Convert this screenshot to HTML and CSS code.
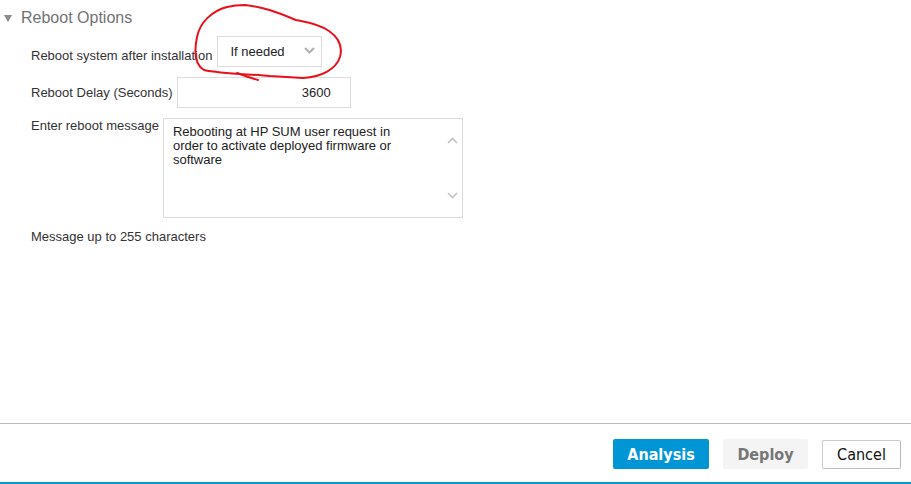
FILE: index.html
```html
<!DOCTYPE html>
<html>
<head>
<meta charset="utf-8">
<link rel="stylesheet" href="styles.css">
</head>
<body>
<div class="page">
  <div class="content">
    <div class="section-head"><span class="caret"></span>Reboot Options</div>
    <div class="form">
      <div class="row row-top">
        <label class="label label-low">Reboot system after installation</label>
        <div class="select">
          <span>If needed</span>
          <svg class="chev" width="11" height="7" viewBox="0 0 11 7"><path d="M1 1 L5.5 5.5 L10 1" fill="none" stroke="#b0b0b0" stroke-width="2"/></svg>
        </div>
      </div>
      <div class="row row-center">
        <label class="label">Reboot Delay (Seconds)</label>
        <div class="input">3600</div>
      </div>
      <div class="row row-top">
        <label class="label">Enter reboot message</label>
        <div class="textarea">
          <div class="ta-text">Rebooting at HP SUM user request in order to activate deployed firmware or software</div>
          <div class="ta-scroll">
            <svg width="11" height="7" viewBox="0 0 11 7"><path d="M1 6 L5.5 1.5 L10 6" fill="none" stroke="#c4c4c4" stroke-width="1.6"/></svg>
            <svg width="11" height="7" viewBox="0 0 11 7"><path d="M1 1 L5.5 5.5 L10 1" fill="none" stroke="#c4c4c4" stroke-width="1.6"/></svg>
          </div>
        </div>
      </div>
      <div class="hint">Message up to 255 characters</div>
    </div>
  </div>
  <div class="footer">
    <button class="btn btn-primary">Analysis</button>
    <button class="btn btn-disabled">Deploy</button>
    <button class="btn btn-default">Cancel</button>
  </div>
  <svg class="annotation" width="911" height="484" viewBox="0 0 911 484">
    <path d="M227,7 C212,11 200,22 197,37 C194,52 195,65 204,70 C222,74 250,74 270,76 L303,78 C322,77 336,69 340,57 C343,46 339,38 329,31 C319,24 306,22 296,20 C281,14 265,7 245,5 C236,5 231,6 227,7" fill="none" stroke="#e8101a" stroke-width="2" stroke-linecap="round"/>
    <path d="M237,73 C245,76 251,78 258,80" fill="none" stroke="#e8101a" stroke-width="2" stroke-linecap="round"/>
  </svg>
</div>
</body>
</html>
```

FILE: styles.css
```css
html, body {
  margin: 0;
  padding: 0;
  background: #ffffff;
}

body {
  font-family: "Liberation Sans", Arial, sans-serif;
  color: #333333;
}

.page {
  position: relative;
  width: 911px;
  height: 484px;
  display: flex;
  flex-direction: column;
  overflow: hidden;
}

.content {
  flex: 1;
  display: flex;
  flex-direction: column;
}

.section-head {
  display: flex;
  align-items: center;
  padding: 9px 0 0 4px;
  height: 18px;
  font-size: 16px;
  line-height: 18px;
  color: #727272;
}

.caret {
  width: 0;
  height: 0;
  border-left: 4px solid transparent;
  border-right: 4px solid transparent;
  border-top: 7px solid #8a8a8a;
  margin-right: 9px;
  margin-top: 1px;
}

.form {
  display: flex;
  flex-direction: column;
  padding: 9px 0 0 31px;
  gap: 10px;
}

.row {
  display: flex;
  gap: 4px;
}

.row-top {
  align-items: flex-start;
}

.row-center {
  align-items: center;
}

.label {
  font-size: 13px;
  line-height: 15px;
  color: #333333;
}

.label-low {
  padding-top: 12px;
}

.select {
  box-sizing: border-box;
  width: 105px;
  height: 31px;
  border: 1px solid #dddddd;
  display: flex;
  align-items: center;
  justify-content: space-between;
  padding: 0 6px 0 12px;
  font-size: 13px;
  color: #222222;
  margin-left: 1px;
}

.select span {
  margin-top: -1px;
}

.chev {
  margin-top: -2px;
}

.input {
  box-sizing: border-box;
  width: 174px;
  height: 31px;
  border: 1px solid #dddddd;
  display: flex;
  align-items: center;
  justify-content: flex-end;
  padding-right: 19px;
  font-size: 13px;
  color: #222222;
}

.textarea {
  box-sizing: border-box;
  width: 300px;
  height: 100px;
  border: 1px solid #dddddd;
  display: flex;
  justify-content: space-between;
  align-items: flex-start;
  padding: 6px 4px 0 9px;
}

.ta-text {
  width: 240px;
  font-size: 13px;
  line-height: 14px;
  color: #222222;
}

.ta-scroll {
  box-sizing: border-box;
  display: flex;
  flex-direction: column;
  justify-content: space-between;
  height: 74px;
  padding-top: 12px;
}

.hint {
  margin-top: 1px;
  font-size: 13px;
  line-height: 15px;
  color: #333333;
}

.footer {
  box-sizing: border-box;
  height: 61px;
  border-top: 1px solid #bbbbbb;
  border-bottom: 2px solid #0096d6;
  display: flex;
  justify-content: flex-end;
  align-items: flex-start;
  gap: 14px;
  padding: 15px 10px 0 0;
}

.btn {
  height: 30px;
  border: none;
  border-radius: 2px;
  font-family: "DejaVu Sans Condensed", "DejaVu Sans", sans-serif;
  font-stretch: condensed;
  font-size: 16px;
  font-weight: bold;
  padding: 0;
  cursor: pointer;
}

.btn-primary {
  width: 96px;
  background: #0096d6;
  color: #ffffff;
}

.btn-disabled {
  width: 85px;
  background: #f4f4f4;
  color: #767676;
}

.btn-default {
  width: 79px;
  height: 29px;
  margin-top: 1px;
  background: #ffffff;
  color: #111111;
  border: 1px solid #cccccc;
  border-right-color: #bbbbbb;
  border-bottom-color: #bbbbbb;
  font-weight: normal;
}

.annotation {
  position: absolute;
  left: 0;
  top: 0;
  pointer-events: none;
}
```
